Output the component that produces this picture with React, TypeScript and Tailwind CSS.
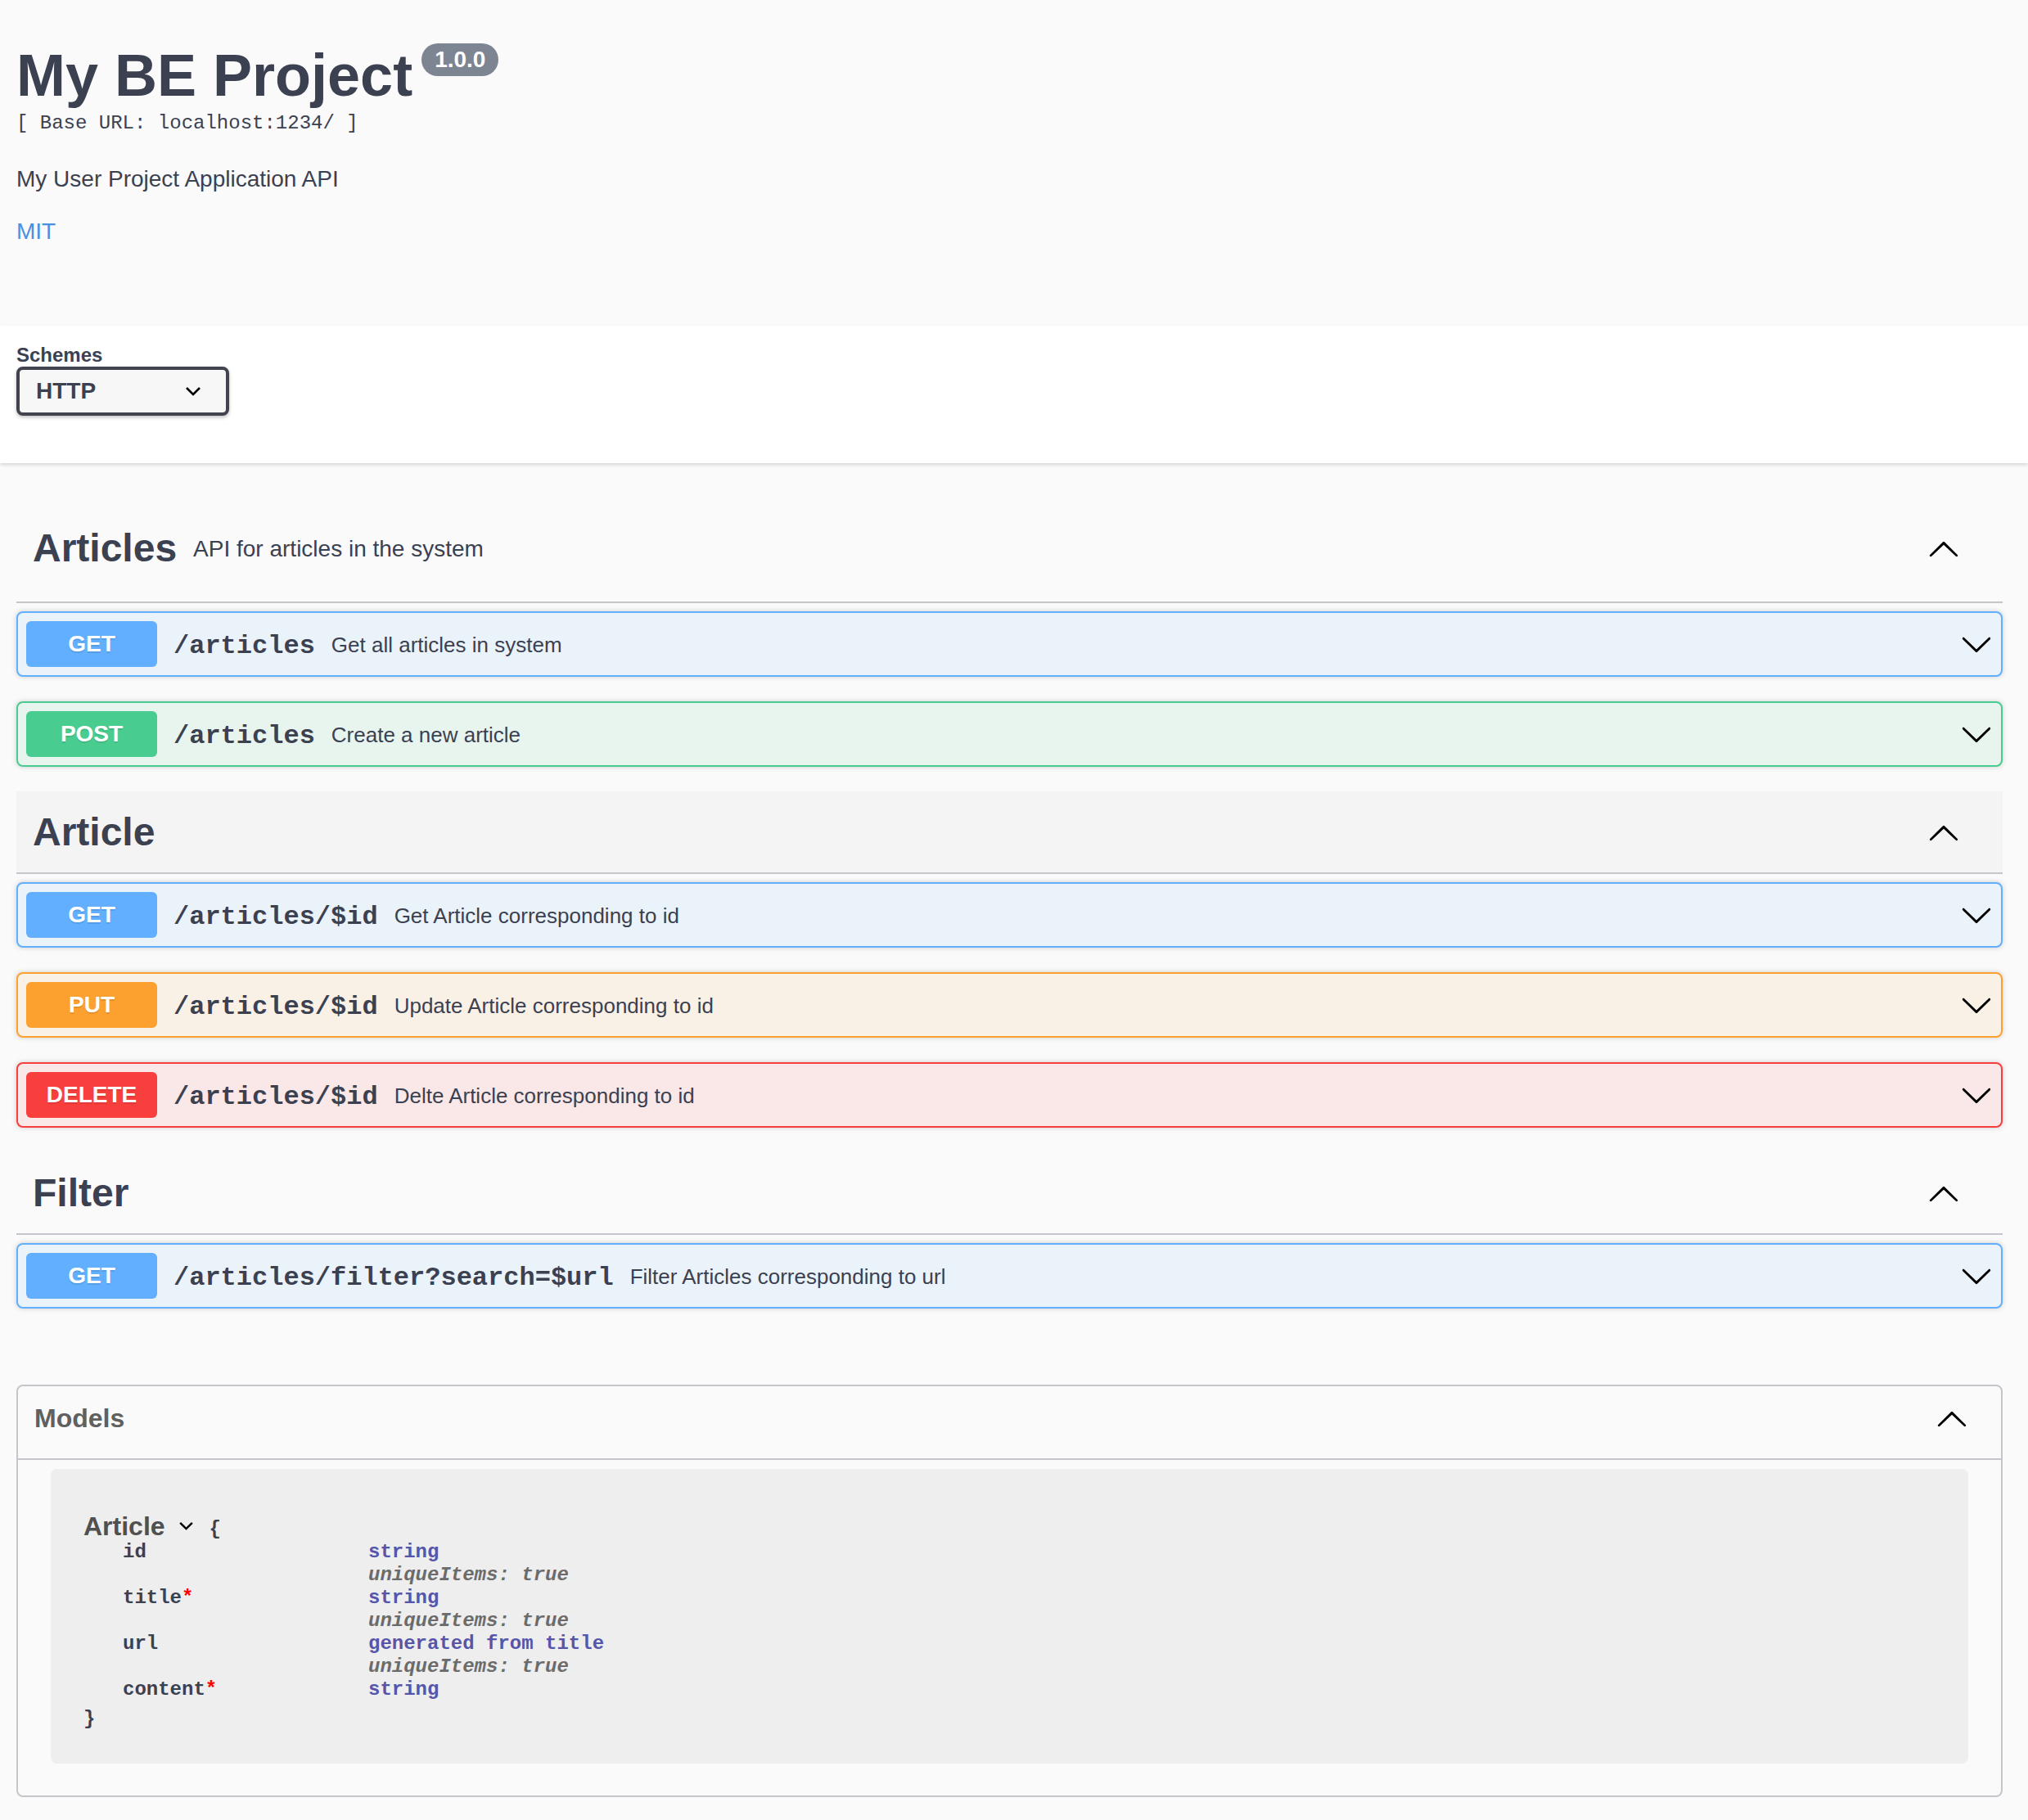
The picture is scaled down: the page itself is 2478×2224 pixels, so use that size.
import React from "react";

type Method = "GET" | "POST" | "PUT" | "DELETE";

type Op = {
  method: Method;
  path: string;
  summary: string;
};

type Tag = {
  name: string;
  description?: string;
  hovered?: boolean;
  ops: Op[];
};

const methodStyles: Record<Method, { box: string; badge: string }> = {
  GET: { box: "border-[#61affe] bg-[#ebf3fa]", badge: "bg-[#61affe]" },
  POST: { box: "border-[#49cc90] bg-[#e8f5ef]", badge: "bg-[#49cc90]" },
  PUT: { box: "border-[#fca130] bg-[#faf1e6]", badge: "bg-[#fca130]" },
  DELETE: { box: "border-[#f93e3e] bg-[#fae7e7]", badge: "bg-[#f93e3e]" },
};

const tags: Tag[] = [
  {
    name: "Articles",
    description: "API for articles in the system",
    ops: [
      { method: "GET", path: "/articles", summary: "Get all articles in system" },
      { method: "POST", path: "/articles", summary: "Create a new article" },
    ],
  },
  {
    name: "Article",
    hovered: true,
    ops: [
      { method: "GET", path: "/articles/$id", summary: "Get Article corresponding to id" },
      { method: "PUT", path: "/articles/$id", summary: "Update Article corresponding to id" },
      { method: "DELETE", path: "/articles/$id", summary: "Delte Article corresponding to id" },
    ],
  },
  {
    name: "Filter",
    ops: [
      {
        method: "GET",
        path: "/articles/filter?search=$url",
        summary: "Filter Articles corresponding to url",
      },
    ],
  },
];

const props = [
  { name: "id", required: false, type: "string", unique: true },
  { name: "title", required: true, type: "string", unique: true },
  { name: "url", required: false, type: "generated from title", unique: true },
  { name: "content", required: true, type: "string", unique: false },
];

const ArrowUp = () => (
  <svg width="40" height="40" viewBox="0 0 20 20" className="shrink-0">
    <path d="M17.418 14.908c.272.268.709.268.979 0s.271-.701 0-.969l-7.908-7.83a.697.697 0 0 0-.979 0l-7.908 7.83c-.27.268-.27.701 0 .969.271.268.709.268.979 0L10 7.933l7.418 6.975z" />
  </svg>
);

const ArrowDown = () => (
  <svg width="40" height="40" viewBox="0 0 20 20" className="shrink-0">
    <path d="M17.418 6.109c.272-.268.709-.268.979 0s.271.701 0 .969l-7.908 7.83c-.27.268-.707.268-.979 0l-7.908-7.83c-.27-.268-.27-.701 0-.969.271-.268.709-.268.979 0L10 13.25l7.418-7.141z" />
  </svg>
);

const SmallChevron = ({ w, h }: { w: number; h: number }) => (
  <svg width={w} height={h} viewBox="0 0 20 12" className="shrink-0">
    <polyline points="2,2 10,10 18,2" fill="none" stroke="#000" strokeWidth="2.6" />
  </svg>
);

const OpBlock = ({ op }: { op: Op }) => {
  const s = methodStyles[op.method];
  return (
    <div
      className={`mb-[30px] flex h-[80px] items-center rounded-[8px] border-2 px-[10px] shadow-[0_0_6px_rgba(0,0,0,0.19)] ${s.box}`}
    >
      <span
        className={`flex h-[56px] w-[160px] shrink-0 items-center justify-center rounded-[6px] text-[28px] font-bold text-white [text-shadow:0_2px_0_rgba(0,0,0,0.1)] ${s.badge}`}
      >
        {op.method}
      </span>
      <span className="mt-[6px] px-[20px] font-['Liberation_Mono',monospace] text-[32px] font-bold text-[#3b4151]">
        {op.path}
      </span>
      <span className="mt-[2px] flex-1 text-[26px] text-[#3b4151]">{op.summary}</span>
      <ArrowDown />
    </div>
  );
};

const TagSection = ({ tag }: { tag: Tag }) => (
  <div className="flex flex-col">
    <div
      className={`mb-[10px] flex items-center border-b-2 border-[#c4c6cb] pl-[20px] pr-[52px] ${
        tag.description ? "h-[133px]" : "h-[101px]"
      } ${tag.hovered ? "bg-[#f4f4f4]" : ""}`}
    >
      <h3 className="text-[48px] font-bold leading-[55px] text-[#3b4151]">{tag.name}</h3>
      <small className="mt-[2px] flex-1 px-[20px] text-[28px] text-[#3b4151]">{tag.description}</small>
      <ArrowUp />
    </div>
    {tag.ops.map((op, i) => (
      <OpBlock key={`${tag.name}-${i}`} op={op} />
    ))}
  </div>
);

export default function App() {
  return (
    <div className="min-h-screen bg-[#fafafa] font-['Liberation_Sans',Arial,sans-serif] text-[#3b4151]">
      {/* info */}
      <div className="h-[398px] pl-[20px] pr-[31px] pt-[51px]">
        <div className="flex items-start">
          <h2 className="text-[72px] font-bold leading-[83px] text-[#3b4151]">My BE Project</h2>
          <span className="ml-[11px] mt-[2px] rounded-full bg-[#7d8492] px-[16px] py-[4px] text-[28px] font-bold leading-[32px] text-white">
            1.0.0
          </span>
        </div>
        <div className="mt-[3px] font-['Liberation_Mono',monospace] text-[24px] leading-[28px] text-[#3b4151]">
          [ Base URL: localhost:1234/ ]
        </div>
        <p className="mt-[38px] text-[28px] leading-[32px]">My User Project Application API</p>
        <p className="mt-[32px] text-[28px] leading-[32px] text-[#4990e2]">MIT</p>
      </div>

      {/* schemes */}
      <div className="relative z-10 h-[168px] bg-white pl-[20px] pr-[31px] pt-[22px] shadow-[0_2px_4px_0_rgba(0,0,0,0.15)]">
        <div className="text-[24px] font-bold leading-[28px] text-[#3b4151]">Schemes</div>
        <div className="flex h-[60px] w-[260px] items-center rounded-[8px] border-4 border-[#41444e] bg-[#f7f7f7] pl-[20px] shadow-[0_2px_4px_0_rgba(0,0,0,0.25)]">
          <span className="text-[28px] font-bold text-[#3b4151]">HTTP</span>
          <span className="ml-auto mr-[30px] flex">
            <SmallChevron w={20} h={12} />
          </span>
        </div>
      </div>

      {/* operations */}
      <div className="pl-[20px] pr-[31px] pt-[38px]">
        {tags.map((t) => (
          <TagSection key={t.name} tag={t} />
        ))}

        {/* models */}
        <section className="mt-[63px] rounded-[8px] border-2 border-[#c4c6cb]">
          <div className="flex h-[90px] items-center border-b-2 border-[#c4c6cb] pb-[10px] pl-[20px] pr-[40px]">
            <h4 className="flex-1 text-[32px] font-bold text-[#606060]">Models</h4>
            <ArrowUp />
          </div>
          <div className="mx-[40px] mb-[39px] mt-[11px] h-[360px] rounded-[8px] bg-[#eeeeee] pl-[40px] pt-[51px]">
            <div className="flex h-[37px] items-center">
              <span className="text-[32px] font-bold text-[#505050]">Article</span>
              <span className="ml-[16px] flex">
                <SmallChevron w={19} h={11} />
              </span>
              <span className="ml-[19px] mt-[8px] font-['Liberation_Mono',monospace] text-[24px] font-bold">{"{"}</span>
            </div>
            <div className="font-['Liberation_Mono',monospace] text-[24px] font-bold leading-[28px]">
              {props.map((p) => (
                <div key={p.name} className="flex pl-[48px]">
                  <div className="w-[300px] text-[#3b4151]">
                    {p.name}
                    {p.required && <span className="text-[#ff0000]">*</span>}
                  </div>
                  <div className="flex flex-col">
                    <span className="text-[#5555aa]">{p.type}</span>
                    {p.unique && <span className="italic text-[#6b6b6b]">uniqueItems: true</span>}
                  </div>
                </div>
              ))}
              <div className="mt-[8px] text-[#3b4151]">{"}"}</div>
            </div>
          </div>
        </section>
      </div>
    </div>
  );
}
